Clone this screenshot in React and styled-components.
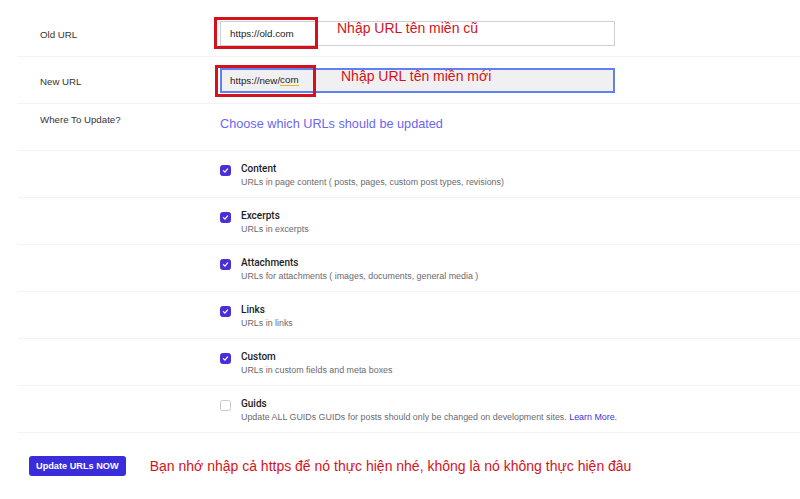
import React from "react";
import styled, { createGlobalStyle } from "styled-components";

const GlobalStyle = createGlobalStyle`
  html, body {
    margin: 0;
    padding: 0;
    background: #fff;
    overflow: hidden;
  }
  body {
    font-family: "Liberation Sans", Arial, sans-serif;
    color: #222;
  }
`;

const Page = styled.div`
  width: 800px;
  height: 499px;
  padding-top: 9px;
  box-sizing: border-box;
`;

const FormTable = styled.div`
  margin-left: 18px;
`;

const Row = styled.div`
  display: grid;
  grid-template-columns: 202px 1fr;
  height: 47px;
  border-top: 1px solid ${(p) => (p.$noLine ? "transparent" : "#f3f3f5")};
  box-sizing: border-box;
  align-items: ${(p) => (p.$top ? "start" : "center")};
`;

const Label = styled.div`
  padding-left: 22px;
  padding-top: ${(p) => (p.$top ? "10px" : "2px")};
  font-size: 9.7px;
  color: #333;
`;

const Field = styled.div`
  display: flex;
  align-items: center;
  position: relative;
`;

const FakeInput = styled.div`
  width: 395px;
  height: 25px;
  box-sizing: border-box;
  display: flex;
  align-items: center;
  padding-left: ${(p) => (p.$focused ? "8px" : "9px")};
  font-size: 9.8px;
  color: #222;
  background: ${(p) => (p.$focused ? "#f0f0f3" : "#fff")};
  border: ${(p) => (p.$focused ? "2px solid #6080f2" : "1px solid #cfcfd2")};
  position: relative;
`;

const Squiggle = styled.span`
  border-bottom: 1px solid #e9b61a;
`;

const RedBox = styled.div`
  position: absolute;
  left: -7px;
  top: ${(p) => p.$top}px;
  width: ${(p) => p.$w}px;
  height: 32px;
  box-sizing: border-box;
  border: 3px solid #d5121b;
`;

const Note = styled.span`
  position: absolute;
  left: ${(p) => p.$left}px;
  top: ${(p) => p.$top}px;
  font-size: 14px;
  color: #d5121b;
  white-space: nowrap;
`;

const Heading = styled.div`
  font-size: 12.7px;
  color: #6b66f2;
  padding-top: 13px;
`;

const Option = styled.div`
  display: flex;
  align-items: flex-start;
  gap: 10px;
  padding-top: 1px;
`;

const Box = styled.span`
  width: 11px;
  height: 11px;
  margin-top: 2px;
  box-sizing: border-box;
  border-radius: 2.5px;
  display: flex;
  align-items: center;
  justify-content: center;
  background: ${(p) => (p.$checked ? "#4a2ed8" : "#fff")};
  border: 1px solid ${(p) => (p.$checked ? "#4a2ed8" : "#c9c9cf")};
`;

const OptionText = styled.div`
  display: flex;
  flex-direction: column;
  gap: 3px;
`;

const OptionTitle = styled.div`
  font-family: Roboto, "Liberation Sans", sans-serif;
  font-size: 10px;
  font-weight: 500;
  color: #1d1d22;
`;

const OptionDesc = styled.div`
  font-size: 8.9px;
  color: #6a6a70;
`;

const LearnMore = styled.a`
  color: #3a34e0;
  text-decoration: none;
`;

const Footer = styled.div`
  display: flex;
  align-items: center;
  gap: 24px;
  height: 66px;
  padding-left: 11px;
  border-top: 1px solid #f3f3f5;
  box-sizing: border-box;
`;

const Button = styled.button`
  height: 20px;
  padding: 0 7px;
  border: none;
  border-radius: 3px;
  background: #3a2ddb;
  color: #fff;
  font-family: "Liberation Sans", Arial, sans-serif;
  font-size: 9.2px;
  font-weight: 700;
`;

const Reminder = styled.span`
  font-size: 14px;
  color: #d5121b;
`;

const Check = () => (
  <svg width="7" height="7" viewBox="0 0 10 10">
    <path d="M2 5.2 L4.2 7.3 L8 2.8" fill="none" stroke="#fff" strokeWidth="1.8" strokeLinecap="round" strokeLinejoin="round" />
  </svg>
);

const options = [
  { title: "Content", desc: "URLs in page content ( posts, pages, custom post types, revisions)", checked: true },
  { title: "Excerpts", desc: "URLs in excerpts", checked: true },
  { title: "Attachments", desc: "URLs for attachments ( images, documents, general media )", checked: true },
  { title: "Links", desc: "URLs in links", checked: true },
  { title: "Custom", desc: "URLs in custom fields and meta boxes", checked: true },
  {
    title: "Guids",
    desc: (
      <>
        Update ALL GUIDs GUIDs for posts should only be changed on development sites.{" "}
        <LearnMore href="#">Learn More.</LearnMore>
      </>
    ),
    checked: false,
  },
];

export default function App() {
  return (
    <Page>
      <GlobalStyle />
      <FormTable>
        <Row $noLine>
          <Label>Old URL</Label>
          <Field>
            <FakeInput>
              https://old.com
              <RedBox $top={-5} $w={104} />
              <Note $left={116} $top={-2}>Nhập URL tên miền cũ</Note>
            </FakeInput>
          </Field>
        </Row>
        <Row>
          <Label>New URL</Label>
          <Field>
            <FakeInput $focused>
              https://new/<Squiggle>com</Squiggle>
              <RedBox $top={-5} $w={101} />
              <Note $left={119} $top={-2}>Nhập URL tên miền mới</Note>
            </FakeInput>
          </Field>
        </Row>
        <Row $top>
          <Label $top>Where To Update?</Label>
          <Heading>Choose which URLs should be updated</Heading>
        </Row>
        {options.map((o) => (
          <Row key={o.title}>
            <div />
            <Option>
              <Box $checked={o.checked}>{o.checked && <Check />}</Box>
              <OptionText>
                <OptionTitle>{o.title}</OptionTitle>
                <OptionDesc>{o.desc}</OptionDesc>
              </OptionText>
            </Option>
          </Row>
        ))}
        <Footer>
          <Button>Update URLs NOW</Button>
          <Reminder>Bạn nhớ nhập cả https để nó thực hiện nhé, không là nó không thực hiện đâu</Reminder>
        </Footer>
      </FormTable>
    </Page>
  );
}
